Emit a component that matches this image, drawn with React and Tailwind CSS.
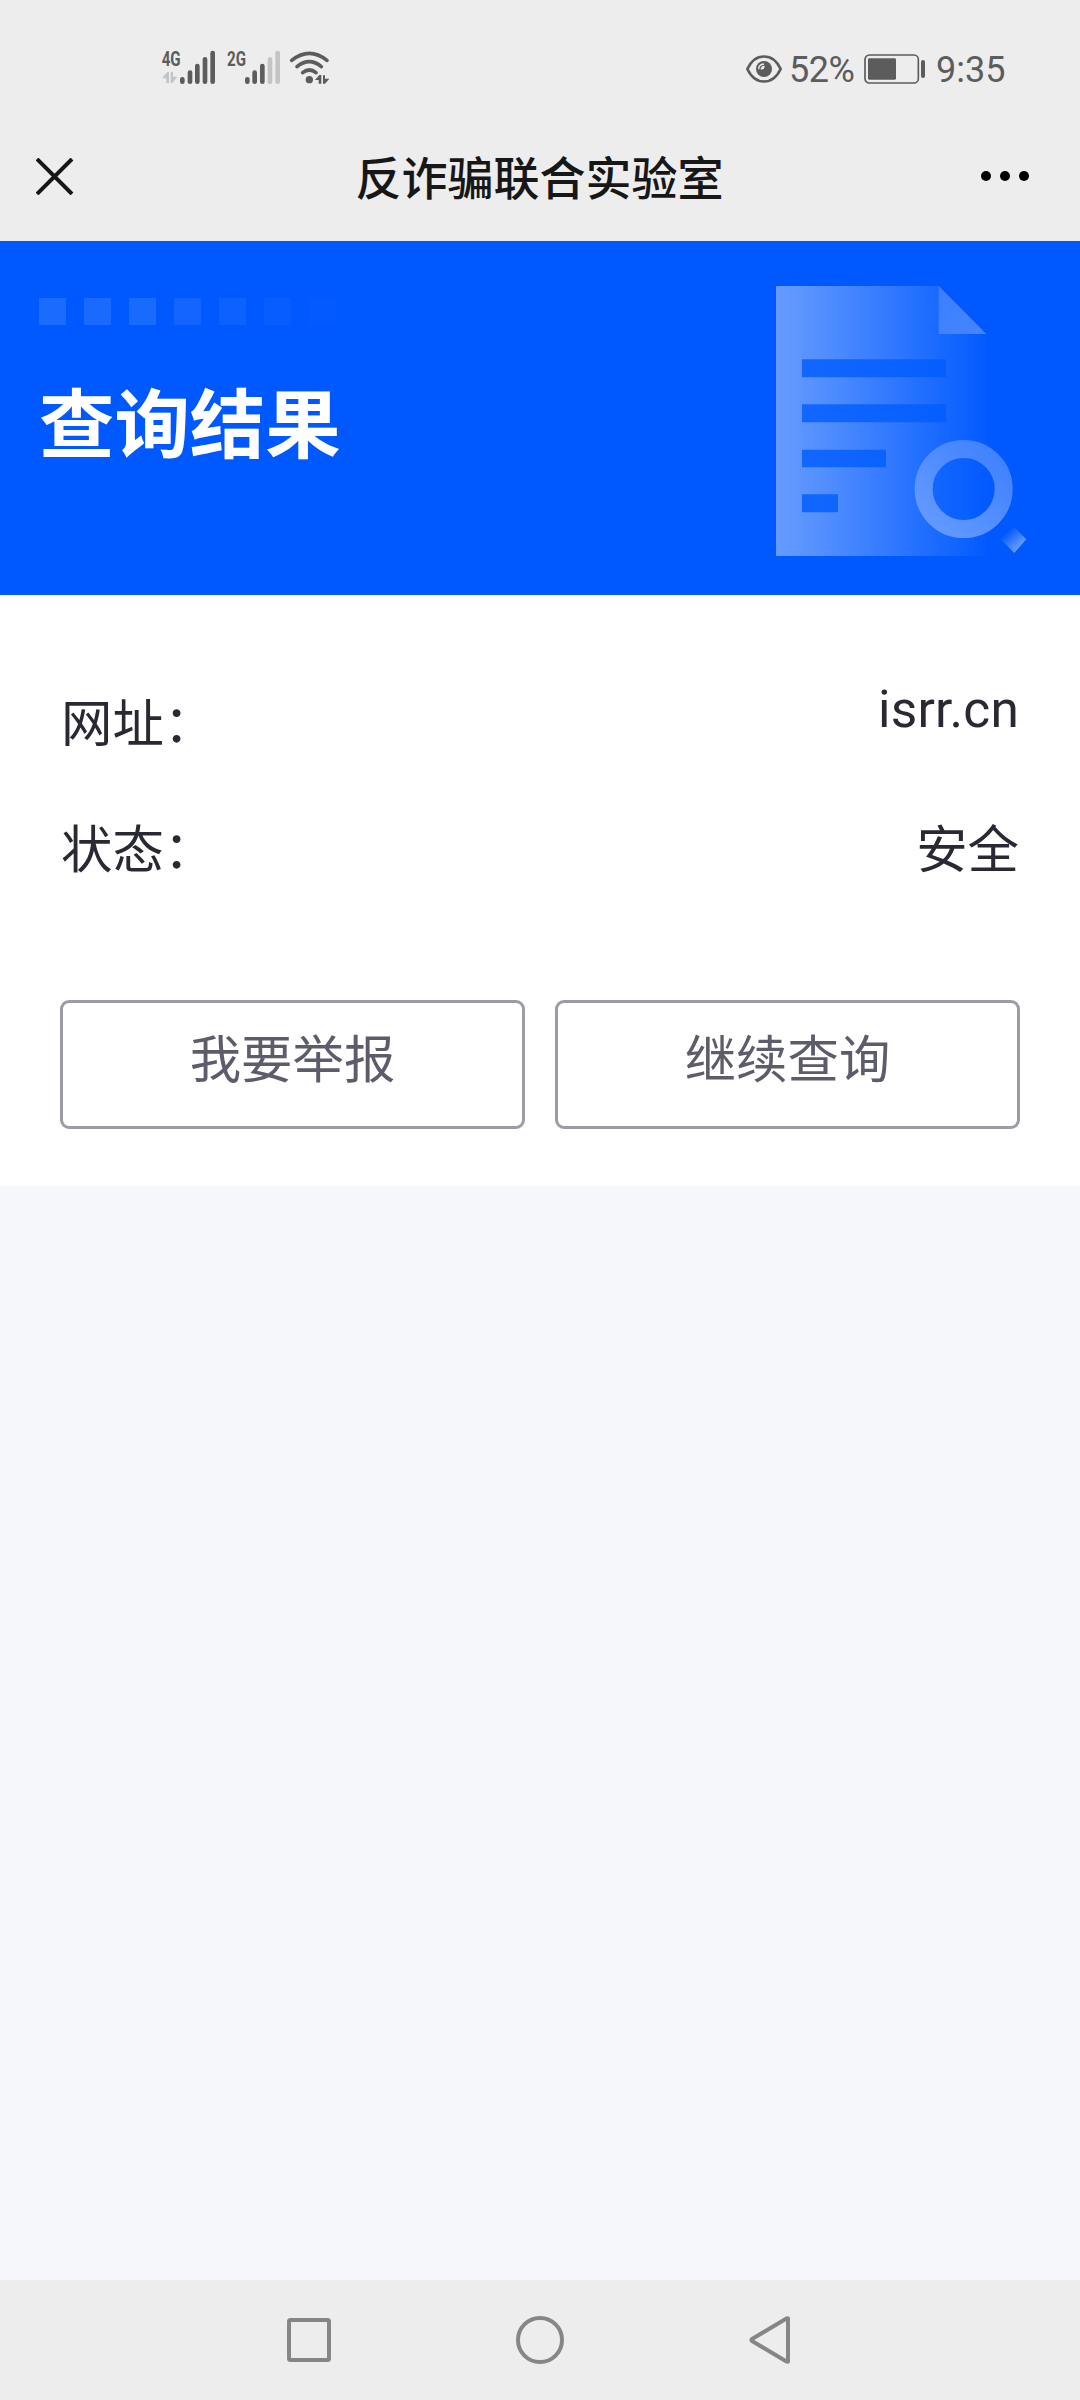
const CJK = "font-['Noto_Sans_CJK_SC',sans-serif]";

function SignalIcons() {
  return (
    <svg className="w-[190px] h-[65px]" viewBox="0 0 570 195" fill="#5c5c5c">
      <g fontFamily="'Roboto', sans-serif" fontWeight="700" fontSize="62">
        <text x="35" y="93" textLength="57" lengthAdjust="spacingAndGlyphs">4G</text>
        <text x="231" y="93" textLength="57" lengthAdjust="spacingAndGlyphs">2G</text>
      </g>
      <path d="M36 130 52 111h5v33h-8v-14zM62 111h7v14h13L67 144h-5z" fill="#c4c4c4" />
      <g stroke="#5c5c5c" strokeWidth="14" strokeLinecap="round">
        <path d="M97 133v7M120 113v27M142 93v47M165 73v67M188 54v86" />
        <path d="M292 133v7M314 113v27M337 93v47" />
        <path d="M360 73v67M383 54v86" stroke="#c4c4c4" />
      </g>
      <g fill="none" stroke="#5c5c5c" strokeWidth="11" strokeLinecap="round">
        <path d="M425 76Q478 34 531 76" />
        <path d="M441 95Q478 65 514 95" />
        <path d="M458 113Q478 97 498 113" />
      </g>
      <circle cx="478" cy="134" r="11" />
      <path d="M495 135 508 120h6v26h-8v-11zM519 121h6v10h13L525 146h-6z" />
    </svg>
  );
}

function EyeIcon() {
  return (
    <svg className="w-9 h-7" viewBox="0 0 108 84">
      <path d="M4 42C28-8 80-8 104 42C80 92 28 92 4 42Z" fill="none" stroke="#5c5c5c" strokeWidth="8" strokeLinejoin="round" />
      <circle cx="54" cy="42" r="24" fill="#5c5c5c" />
      <path d="M38 43Q38 28 54 27" fill="none" stroke="#ededed" strokeWidth="4" />
      <path d="M44 44Q44 32 56 32Q56 44 44 44Z" fill="#ededed" />
    </svg>
  );
}

function BatteryIcon() {
  return (
    <svg className="w-[62px] h-[30px]" viewBox="0 0 186 90">
      <rect x="3" y="3" width="160" height="84" rx="13" fill="none" stroke="#5c5c5c" strokeWidth="5" />
      <rect x="12" y="13" width="84" height="64" rx="4" fill="#5c5c5c" />
      <rect x="171" y="18" width="12" height="54" rx="6" fill="#5c5c5c" />
    </svg>
  );
}

function StatusBar() {
  return (
    <div className="h-[112px] flex items-start pl-[150px] pr-[76px] text-[#5c5c5c] font-[Roboto,sans-serif] text-[36px]">
      <div className="pt-[35px]"><SignalIcons /></div>
      <div className="ml-auto mt-[54px] h-[30px] flex items-center">
        <EyeIcon />
        <span className="ml-[7px] w-[66px] pt-[2px] leading-[30px] tracking-[-0.5px] whitespace-nowrap">52%</span>
        <div className="ml-[9px]"><BatteryIcon /></div>
        <span className="ml-[10px] w-[68px] pt-[2px] leading-[30px] whitespace-nowrap">9:35</span>
      </div>
    </div>
  );
}

function TitleBar() {
  return (
    <div className="h-[129px] flex items-center justify-between pl-[36px] pr-[50px]">
      <svg className="mr-[11px] w-[52px] h-[37px]" viewBox="0 0 52 37" stroke="#171717" strokeWidth="4">
        <path d="M1 1 36 36M36 1 1 36" />
      </svg>
      <h1 className={`${CJK} pb-[3px] font-medium text-[46px] leading-[60px] text-[#171717]`}>反诈骗联合实验室</h1>
      <svg className="mb-[1px] w-[50px] h-[12px]" viewBox="0 0 50 12">
        <circle cx="6" cy="6" r="5" />
        <circle cx="25" cy="6" r="5" />
        <circle cx="44" cy="6" r="5" />
      </svg>
    </div>
  );
}

function DocumentArt() {
  return (
    <svg className="w-[252px] h-[272px]" viewBox="0 0 756 816">
      <defs>
        <linearGradient id="page" x1="0" x2="1">
          <stop offset="0" stopColor="#fff" stopOpacity=".4" />
          <stop offset=".1" stopColor="#fff" stopOpacity=".37" />
          <stop offset="1" stopColor="#fff" stopOpacity="0.01" />
        </linearGradient>
        <linearGradient id="fold" x1="0" y1="0" x2="1" y2="1">
          <stop offset="0" stopColor="#3a7eff" />
          <stop offset="1" stopColor="#4685ff" />
        </linearGradient>
        <linearGradient id="line" x1="78" x2="511" gradientUnits="userSpaceOnUse">
          <stop offset="0" stopColor="#1267ff" />
          <stop offset="1" stopColor="#055eff" />
        </linearGradient>
        <linearGradient id="lens" x1="0" y1="0" x2="1" y2="0">
          <stop offset="0" stopColor="#1466ff" />
          <stop offset="1" stopColor="#0059ff" />
        </linearGradient>
        <linearGradient id="ring" x1="0" y1="1" x2="1" y2="0">
          <stop offset="0" stopColor="#659bff" />
          <stop offset="1" stopColor="#3d80ff" />
        </linearGradient>
        <linearGradient id="handle" x1="692" y1="738" x2="733" y2="781" gradientUnits="userSpaceOnUse">
          <stop offset="0" stopColor="#0059ff" />
          <stop offset="1" stopColor="#659bff" />
        </linearGradient>
      </defs>
      <path d="M0 0H488L631 143V810H0Z" fill="url(#page)" />
      <path d="M488 0 631 144H488Z" fill="url(#fold)" />
      <path d="M78 220H511V274H78zM78 355H511V409H78zM78 491H330V544H78zM78 625H186V679H78z" fill="url(#line)" />
      <circle cx="563" cy="609" r="94" fill="url(#lens)" />
      <circle cx="563" cy="609" r="120" fill="none" stroke="url(#ring)" strokeWidth="54" />
      <path d="M711 720 751 760 715 801 670 756Z" fill="url(#handle)" />
    </svg>
  );
}

function Banner() {
  const squares = ["opacity-100", "opacity-95", "opacity-90", "opacity-70", "opacity-45", "opacity-25", "opacity-10"];
  return (
    <section className="h-[354px] bg-[#0059ff] flex justify-between pl-[39px] pr-[52px]">
      <div className="pt-[57px]">
        <div className="flex gap-[18px]">
          {squares.map((o) => <span key={o} className={`size-[27px] bg-[#1c6bff] ${o}`} />)}
        </div>
        <h2 className={`${CJK} mt-[45px] font-bold text-[75.4px] leading-[100px] text-white`}>查询结果</h2>
      </div>
      <div className="pt-[45px]"><DocumentArt /></div>
    </section>
  );
}

function ResultCard() {
  return (
    <section className={`${CJK} h-[591px] bg-white px-[60px] pt-[90px] text-[51.4px] leading-[70px] text-[#292934]`}>
      <div className="h-[126px] flex items-start justify-between">
        <span className="pl-[1px]">网址：</span>
        <span className="font-[Roboto,sans-serif] text-[51.4px] tracking-[0.2px] mt-[-10px] pr-[1px]">isrr.cn</span>
      </div>
      <div className="flex items-start justify-between">
        <span className="pl-[1px]">状态：</span>
        <span className="pr-[1px]">安全</span>
      </div>
      <div className="mt-[119px] flex gap-[30px] text-[#5c5c6b]">
        <button className="flex-1 h-[129px] rounded-[9px] border-[3px] border-[#9c9ca6] pb-[18px]">我要举报</button>
        <button className="flex-1 h-[129px] rounded-[9px] border-[3px] border-[#9c9ca6] pb-[18px]">继续查询</button>
      </div>
    </section>
  );
}

function NavBar() {
  return (
    <nav className="h-[120px] bg-[#ededed] pl-[285px] pr-[289px] flex items-center justify-between">
      <svg className="size-12" viewBox="0 0 48 48" fill="none" stroke="#868686" strokeWidth="4">
        <rect x="4" y="4" width="40" height="40" rx="1.5" />
      </svg>
      <svg className="size-12" viewBox="0 0 48 48" fill="none" stroke="#868686" strokeWidth="4">
        <circle cx="24" cy="24" r="22" />
      </svg>
      <svg className="w-[44px] h-12" viewBox="0 0 44 48" fill="none" stroke="#868686" strokeWidth="4" strokeLinejoin="round">
        <path d="M41 2.500V45.500Q40.500 46 39.500 45.500L5 25Q4 24 5 23L39.500 2.500Q40.500 2 41 2.500Z" />
      </svg>
    </nav>
  );
}

export default function App() {
  return (
    <div className="w-[1080px] h-[2400px] flex flex-col bg-[#f5f7fb] overflow-hidden">
      <header className="bg-[#ededed]">
        <StatusBar />
        <TitleBar />
      </header>
      <main className="flex-1">
        <Banner />
        <ResultCard />
      </main>
      <NavBar />
    </div>
  );
}
